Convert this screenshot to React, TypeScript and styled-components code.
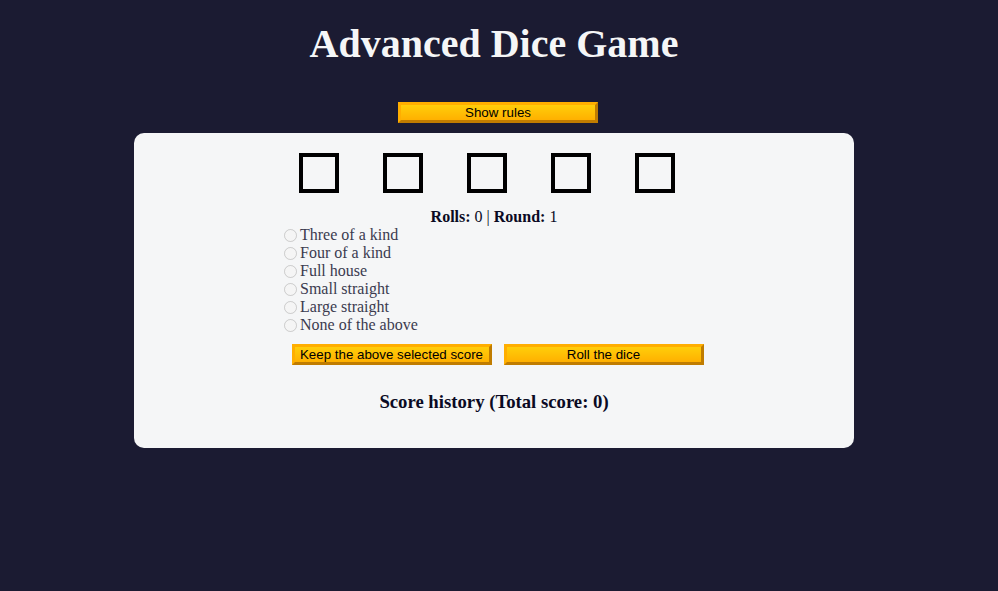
import React from "react";
import styled, { createGlobalStyle } from "styled-components";

const GlobalStyle = createGlobalStyle`
  html, body {
    margin: 0;
    padding: 0;
    background: #1b1b32;
  }
  body {
    font-family: "Liberation Serif", "Times New Roman", serif;
    color: #0a0a23;
  }
`;

const Page = styled.div`
  width: 988px;
  display: flex;
  flex-direction: column;
  align-items: center;
  padding-top: 21px;
`;

const Title = styled.h1`
  margin: 0;
  font-family: "Liberation Serif", "Times New Roman", serif;
  font-size: 40px;
  line-height: 46px;
  font-weight: bold;
  color: #f5f6f7;
  text-align: center;
`;

const RulesRow = styled.div`
  display: flex;
  justify-content: center;
  padding-left: 8px;
  margin-top: 35px;
`;

const GoldButton = styled.button`
  box-sizing: border-box;
  width: 200px;
  height: 21px;
  padding: 0 4px;
  font-family: "Liberation Sans", Arial, sans-serif;
  font-size: 13.33px;
  line-height: 15px;
  color: #000;
  background-color: #ffbb00;
  background-image: linear-gradient(#ffce0a, #ffb000);
  border-width: 3px;
  border-style: solid;
  border-color: #ffae00 #c07c00 #c07c00 #ffae00;
  cursor: pointer;
  white-space: nowrap;
`;

const Panel = styled.section`
  box-sizing: border-box;
  width: 720px;
  height: 315px;
  margin-top: 10px;
  background: #f5f6f7;
  border-radius: 10px;
  padding-top: 20px;
  display: flex;
  flex-direction: column;
`;

const DiceRow = styled.div`
  display: flex;
  justify-content: center;
  gap: 44px;
  padding-right: 14px;
`;

const Die = styled.div`
  box-sizing: border-box;
  width: 40px;
  height: 40px;
  border: 4px solid #000;
`;

const Stats = styled.p`
  margin: 15px 0 0;
  font-size: 16px;
  line-height: 18px;
  text-align: center;
  color: #0a0a23;
`;

const Options = styled.div`
  display: flex;
  flex-direction: column;
  padding-left: 145px;
`;

const OptionRow = styled.label`
  display: flex;
  align-items: flex-start;
  height: 18px;
  font-size: 16px;
  line-height: 18px;
  color: #3b3b4f;
`;

const Radio = styled.input`
  width: 13px;
  height: 13px;
  margin: 3px 3px 0 5px;
`;

const ActionRow = styled.div`
  display: flex;
  justify-content: center;
  gap: 12px;
  padding-left: 7px;
  margin-top: 10px;
`;

const History = styled.h3`
  margin: 26px 0 0;
  font-size: 18.72px;
  line-height: 22px;
  font-weight: bold;
  text-align: center;
  color: #0a0a23;
`;

const options = [
  "Three of a kind",
  "Four of a kind",
  "Full house",
  "Small straight",
  "Large straight",
  "None of the above",
];

export default function App() {
  return (
    <>
      <GlobalStyle />
      <Page>
        <Title>Advanced Dice Game</Title>
        <RulesRow>
          <GoldButton type="button">Show rules</GoldButton>
        </RulesRow>
        <Panel>
          <DiceRow>
            {[0, 1, 2, 3, 4].map((i) => (
              <Die key={i} />
            ))}
          </DiceRow>
          <Stats>
            <strong>Rolls:</strong> 0 | <strong>Round:</strong> 1
          </Stats>
          <Options>
            {options.map((o) => (
              <OptionRow key={o}>
                <Radio type="radio" name="score" disabled />
                {o}
              </OptionRow>
            ))}
          </Options>
          <ActionRow>
            <GoldButton type="button">Keep the above selected score</GoldButton>
            <GoldButton type="button">Roll the dice</GoldButton>
          </ActionRow>
          <History>Score history (Total score: 0)</History>
        </Panel>
      </Page>
    </>
  );
}
